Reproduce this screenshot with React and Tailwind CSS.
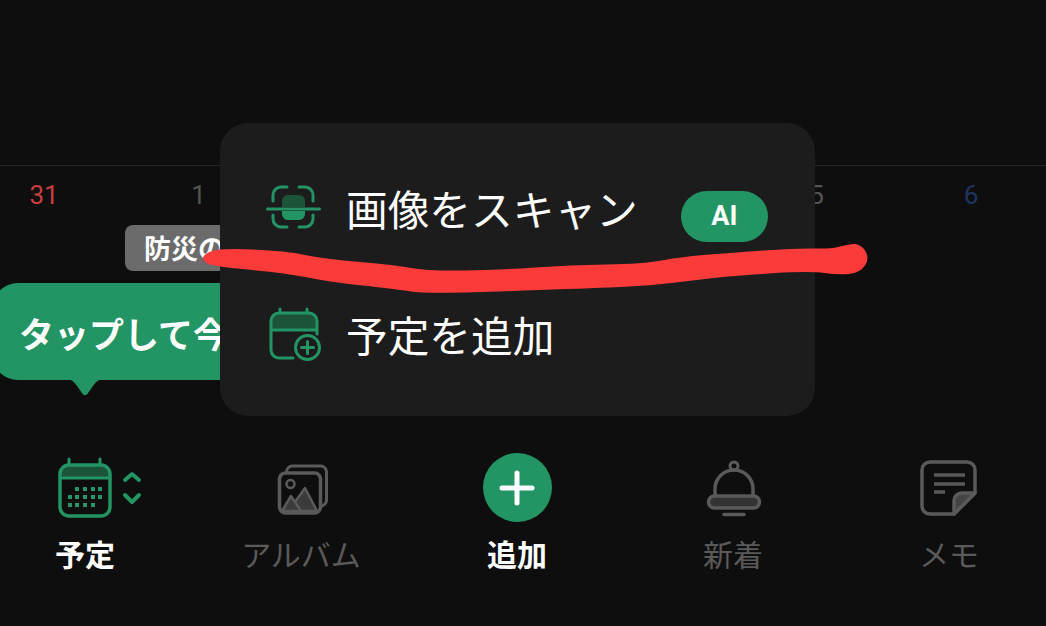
import React from "react";

const GREEN = "#239464";
const GREY = "#5a5a5a";

// 2, 3 and 4 sit behind the popup, so those cells stay empty
const days = [
  { n: "31", c: "text-[#c93f3f]" },
  { n: "1", c: "text-[#555555]" },
  { n: "", c: "" },
  { n: "", c: "" },
  { n: "", c: "" },
  { n: "5", c: "text-[#555555]" },
  { n: "6", c: "text-[#1f3560]" },
];

// outline of the red marker stroke
const strokePts = [
  [202, 255], [220, 248], [285, 251], [325, 259], [395, 265], [427, 271], [500, 270], [570, 265],
  [643, 264], [680, 257], [727, 253], [800, 248], [830, 249], [846, 245], [860, 243], [870, 258],
  [860, 273], [838, 275], [810, 271], [727, 276], [650, 286], [570, 289], [427, 294], [395, 289],
  [330, 282], [285, 273], [220, 267], [204, 263],
];

const smoothPath = (pts) => {
  const mid = (a, b) => [(a[0] + b[0]) / 2, (a[1] + b[1]) / 2];
  const start = mid(pts[pts.length - 1], pts[0]);
  let d = `M${start[0]} ${start[1]}`;
  pts.forEach((p, i) => {
    const m = mid(p, pts[(i + 1) % pts.length]);
    d += ` Q${p[0]} ${p[1]} ${m[0]} ${m[1]}`;
  });
  return d + " Z";
};

const ScanIcon = () => (
  <svg width="56" height="48" viewBox="0 0 56 48" fill="none" stroke={GREEN} strokeWidth="3" strokeLinecap="round">
    <path d="M7 17v-6a8 8 0 0 1 8-8h6M33 3h6a8 8 0 0 1 8 8v6M7 31v4a8 8 0 0 0 8 8h6M33 43h6a8 8 0 0 0 8-8v-4" />
    <path d="M16 23v-6a6 6 0 0 1 6-6h11a6 6 0 0 1 6 6v6z" fill="#1b5439" stroke="none" />
    <path d="M16 27h23v3a6 6 0 0 1-6 6H22a6 6 0 0 1-6-6z" fill={GREEN} stroke="none" />
    <path d="M1.500 25h52" />
  </svg>
);

const CalendarPlusIcon = () => (
  <svg width="56" height="56" viewBox="0 0 56 56" fill="none" stroke={GREEN} strokeWidth="3" strokeLinecap="round">
    <path d="M4 23v-8a7 7 0 0 1 7-7h30a7 7 0 0 1 7 7v8z" fill="#1b5439" stroke="none" />
    <path d="M25 52H11a8 8 0 0 1-8-8V15a8 8 0 0 1 8-8h30a8 8 0 0 1 8 8v13M3 24h46M12 3v4M39 3v4" />
    <circle cx="39.500" cy="41.500" r="12" />
    <path d="M39.500 35.500v12M33.500 41.500h12" />
  </svg>
);

const dots = [
  [21, 32], [29, 32], [37, 32], [44, 32],
  [14, 40], [21, 40], [29, 40], [37, 40], [44, 40],
  [14, 48], [21, 48], [29, 48], [37, 48],
];

const CalendarIcon = () => (
  <svg width="58" height="62" viewBox="0 0 58 62" fill="none" stroke={GREEN} strokeWidth="3.500" strokeLinecap="round">
    <path d="M5 20v-7a6 6 0 0 1 6-6h36a6 6 0 0 1 6 6v7z" fill="#1b5439" stroke="none" />
    <rect x="4" y="8" width="50" height="51" rx="9" />
    <path d="M4 21h50M13 2v5M44 2v5" strokeWidth="3" />
    {dots.map(([x, y]) => (
      <rect key={x + "-" + y} x={x - 2} y={y - 2} width="4" height="4" fill={GREEN} stroke="none" />
    ))}
  </svg>
);

const Chevrons = () => (
  <svg width="20" height="34" viewBox="0 0 20 34" fill="none" stroke={GREEN} strokeWidth="4" strokeLinecap="round" strokeLinejoin="round">
    <path d="M3 9l7-6 7 6M3 24l7 7 7-7" />
  </svg>
);

const AlbumIcon = () => (
  <svg width="56" height="56" viewBox="0 0 56 56" fill="none" stroke={GREY} strokeWidth="3" strokeLinejoin="round">
    <path d="M13.500 12a6 6 0 0 1 6-6h28a6 6 0 0 1 6 6v28a6 6 0 0 1-6 6" />
    <rect x="6.500" y="13" width="41" height="40" rx="6" strokeWidth="3.500" />
    <circle cx="17.500" cy="24" r="4" strokeWidth="2.500" />
    <path d="M22 42l10-14 12 23H17z" fill="#3b3b3b" strokeWidth="2.500" />
    <path d="M9 51l9-15 10 15z" fill="#3b3b3b" strokeWidth="2.500" />
  </svg>
);

const BellIcon = () => (
  <svg width="60" height="60" viewBox="0 0 60 60" fill="none" stroke={GREY} strokeWidth="3.500" strokeLinecap="round">
    <circle cx="31" cy="8" r="4" strokeWidth="3" />
    <path d="M12 38V31a19 19 0 0 1 38 0v7" />
    <rect x="5.500" y="38" width="51" height="12" rx="6" fill="#333333" />
    <path d="M21 56.500h20" />
  </svg>
);

const MemoIcon = () => (
  <svg width="58" height="56" viewBox="0 0 58 56" fill="none" stroke={GREY} strokeWidth="3.500" strokeLinecap="round" strokeLinejoin="round">
    <path d="M34 54H10a8 8 0 0 1-8-8V10a8 8 0 0 1 8-8h37a8 8 0 0 1 8 8v23z" />
    <path d="M55 33H42a8 8 0 0 0-8 8v13z" fill="#444444" />
    <path d="M14 15h31M14 24h31M14 32h11" strokeLinecap="butt" />
  </svg>
);

const PlusButton = () => (
  <div className="w-[69px] h-[69px] rounded-full bg-[#239464] flex items-center justify-center">
    <svg width="36" height="36" viewBox="0 0 36 36" stroke="#ffffff" strokeWidth="5" strokeLinecap="round">
      <path d="M18 3v30M3 18h30" />
    </svg>
  </div>
);

const NavItem = ({ icon, label, active, extra }) => (
  <div className="flex flex-col items-center">
    <div className="relative h-[69px] flex items-center justify-center">
      {icon}
      {extra && <div className="absolute left-[66px] top-[18px]">{extra}</div>}
    </div>
    <span className={"mt-[14px] text-[30px] leading-[40px] " + (active ? "font-bold text-white" : "text-[#5a5a5a]")}>
      {label}
    </span>
  </div>
);

export default function App() {
  return (
    <div
      lang="ja"
      className="relative w-[1046px] h-[626px] overflow-hidden bg-[#0e0e0e] flex flex-col font-['Roboto','Noto_Sans_CJK_JP',sans-serif]"
    >
      {/* empty area above the calendar */}
      <div className="h-[166px] shrink-0 border-b border-[#262626]" />

      {/* calendar row */}
      <div className="h-[287px] shrink-0 flex flex-col">
        <div className="flex gap-[114.500px] pl-[24px] pt-[12px]">
          {days.map((d, i) => (
            <span key={i} className={"w-[40px] h-[34px] shrink-0 text-center text-[26px] leading-[34px] " + d.c}>
              {d.n}
            </span>
          ))}
        </div>
        <div className="mt-[13px] ml-[125px] w-[200px] h-[46px] rounded-[8px] bg-[#6b6b6b] pl-[19px] pt-[5px] flex items-center text-[27px] font-bold text-white">
          防災の日
        </div>
        <div className="relative mt-[12px] -ml-[8px] w-[400px] h-[97px] rounded-[26px] bg-[#239464] pl-[27px] pt-[11px] flex items-center text-[35px] font-bold text-white whitespace-nowrap">
          タップして今日の予定
          <svg width="40" height="17" viewBox="0 0 40 17" className="absolute left-[73px] top-[96px]" fill="#239464">
            <path d="M0 0h40c-7 0-9 3-12 7l-5 7c-2 3-4 3-6 0l-5-7C9 3 7 0 0 0z" />
          </svg>
        </div>
      </div>

      {/* bottom nav */}
      <div className="-ml-[23px] w-[1080px] grid grid-cols-5">
        <NavItem icon={<CalendarIcon />} label="予定" active extra={<Chevrons />} />
        <NavItem icon={<AlbumIcon />} label="アルバム" />
        <NavItem icon={<PlusButton />} label="追加" active />
        <NavItem icon={<BellIcon />} label="新着" />
        <NavItem icon={<MemoIcon />} label="メモ" />
      </div>

      {/* popup menu */}
      <div className="absolute left-[220px] top-[123px] w-[595px] h-[293px] rounded-[28px] bg-[#1c1c1c] flex flex-col px-[46px] pt-[59px] text-[41.700px] text-white">
        <div className="flex items-center h-[60px] whitespace-nowrap">
          <div className="w-[80px] shrink-0 mb-[8px]"><ScanIcon /></div>
          <span className="leading-[60px]">画像をスキャン</span>
          <span className="ml-[43px] mt-[8px] w-[87px] h-[51px] shrink-0 rounded-full bg-[#239464] flex items-center justify-center text-[27px] font-bold">
            AI
          </span>
        </div>
        <div className="flex items-center h-[60px] mt-[66px] whitespace-nowrap">
          <div className="w-[80px] shrink-0 pl-[2px] mb-[8px]"><CalendarPlusIcon /></div>
          <span className="leading-[60px]">予定を追加</span>
        </div>
      </div>

      {/* hand drawn red line on top of the screenshot */}
      <svg width="1046" height="626" viewBox="0 0 1046 626" className="absolute inset-0 pointer-events-none">
        <path d={smoothPath(strokePts)} fill="#fb3a3a" />
      </svg>
    </div>
  );
}
